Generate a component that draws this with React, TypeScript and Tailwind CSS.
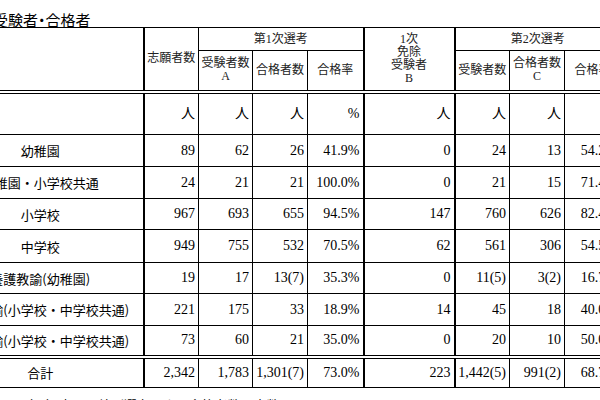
import React from "react";

const serif = "font-['Liberation_Serif','Noto_Sans_CJK_JP',serif]";
const sans = "font-['Noto_Sans_CJK_JP','Noto_Sans',sans-serif]";

type Row = string[];

const rows: { h: string; cells: Row }[] = [
  { h: "h-[32px]", cells: ["幼稚園", "89", "62", "26", "41.9%", "0", "24", "13", "54.2%"] },
  { h: "h-[32px]", cells: ["幼稚園・小学校共通", "24", "21", "21", "100.0%", "0", "21", "15", "71.4%"] },
  { h: "h-[31px]", cells: ["小学校", "967", "693", "655", "94.5%", "147", "760", "626", "82.4%"] },
  { h: "h-[33px]", cells: ["中学校", "949", "755", "532", "70.5%", "62", "561", "306", "54.5%"] },
  { h: "h-[31px]", cells: ["養護教諭(幼稚園)", "19", "17", "13(7)", "35.3%", "0", "11(5)", "3(2)", "16.7%"] },
  { h: "h-[32px]", cells: ["養護教諭(小学校・中学校共通)", "221", "175", "33", "18.9%", "14", "45", "18", "40.0%"] },
  { h: "h-[31px]", cells: ["栄養教諭(小学校・中学校共通)", "73", "60", "21", "35.0%", "0", "20", "10", "50.0%"] },
];

const cellB = "border border-black";
const num = `border border-black text-right pr-[3px] text-[14px] leading-none ${serif}`;
const th = `border border-black text-center align-middle font-normal text-[12px] leading-[13px] text-[#222] ${serif}`;

// thicker vertical separators after columns 0, 4, 5
const thick = (j: number) =>
  j === 0 ? "border-r-2" : j === 4 ? "border-r-2" : j === 5 ? "border-l-2 border-r-2" : "";

export default function App() {
  return (
    <div className="w-[600px] h-[400px] overflow-hidden bg-white text-black">
      <div className={`pt-[12px] text-[15px] leading-[15px] whitespace-nowrap ml-[-7px] ${sans}`}>
        受験者<span className="[font-feature-settings:'palt']">・</span>合格者
      </div>
      <table className="ml-[-63px] w-[683px] table-fixed border-collapse">
        <colgroup>
          <col className="w-[206px]" />
          <col className="w-[55px]" />
          <col className="w-[54px]" />
          <col className="w-[55px]" />
          <col className="w-[56px]" />
          <col className="w-[91px]" />
          <col className="w-[55px]" />
          <col className="w-[55px]" />
          <col className="w-[56px]" />
        </colgroup>
        <thead>
          <tr className="h-[23px]">
            <th rowSpan={2} className={`${cellB} border-r-2 border-b-[4px] border-double`}></th>
            <th rowSpan={2} className={`${th} border-b-[4px] border-double`}>志願者数</th>
            <th colSpan={3} className={`${th} border-r-2`}>第1次選考</th>
            <th rowSpan={2} className={`${th} border-l-2 border-r-2 border-b-[4px] border-double`}>
              1次
              <br />
              免除
              <br />
              受験者
              <br />B
            </th>
            <th colSpan={3} className={th}>第2次選考</th>
          </tr>
          <tr className="h-[41px]">
            <th className={`${th} border-b-[4px] border-double`}>
              受験者数
              <br />A
            </th>
            <th className={`${th} border-b-[4px] border-double`}>合格者数</th>
            <th className={`${th} border-r-2 border-b-[4px] border-double`}>合格率</th>
            <th className={`${th} border-b-[4px] border-double`}>受験者数</th>
            <th className={`${th} border-b-[4px] border-double`}>
              合格者数
              <br />C
            </th>
            <th className={`${th} border-b-[4px] border-double`}>合格率</th>
          </tr>
        </thead>
        <tbody>
          <tr className="h-[43px]">
            {["", "人", "人", "人", "%", "人", "人", "人", "%"].map((u, j) => (
              <td key={j} className={`${num} text-[13px] ${thick(j)}`}>
                {u}
              </td>
            ))}
          </tr>
          {rows.map((r, i) => (
            <tr key={i} className={r.h}>
              {r.cells.map((c, j) => (
                <td
                  key={j}
                  className={`${
                    j === 0
                      ? `border border-black text-center text-[13px] leading-none ${sans}`
                      : num
                  } whitespace-nowrap ${thick(j)} ${i === rows.length - 1 ? "border-b-[4px] border-double" : ""}`}
                >
                  {c}
                </td>
              ))}
            </tr>
          ))}
          <tr className="h-[31px]">
            <td className={`border border-black border-r-2 text-center text-[13px] leading-none ${sans}`}>合計</td>
            <td className={num}>2,342</td>
            <td className={num}>1,783</td>
            <td className={`${num} text-[12px] pr-[2px] whitespace-nowrap`}>1,301(7)</td>
            <td className={`${num} border-r-2`}>73.0%</td>
            <td className={`${num} border-l-2 border-r-2`}>223</td>
            <td className={`${num} whitespace-nowrap`}>1,442(5)</td>
            <td className={`${num} whitespace-nowrap`}>991(2)</td>
            <td className={num}>68.7%</td>
          </tr>
        </tbody>
      </table>
      <div className={`mt-[9px] ml-[20px] text-[13px] leading-[15px] whitespace-nowrap ${sans}`}>
        （　）内は、特別選考による合格者数で内数である。
      </div>
    </div>
  );
}
